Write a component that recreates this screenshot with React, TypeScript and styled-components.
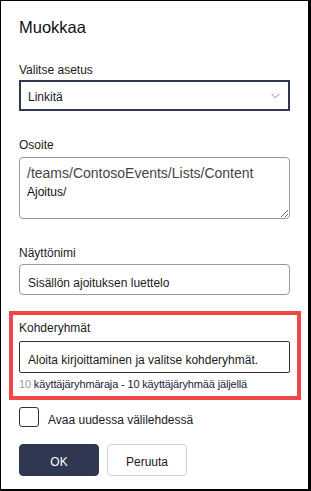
import React from "react";
import styled, { createGlobalStyle } from "styled-components";

const Global = createGlobalStyle`
  html, body { margin: 0; padding: 0; background: #fff; }
  body { font-family: "Liberation Sans", Arial, sans-serif; color: #1b1b1b; }
  * { box-sizing: border-box; }
`;

const NAVY = "#2f3751";

const Panel = styled.div`
  width: 311px;
  height: 491px;
  border-style: solid;
  border-color: #000;
  border-width: 1px 3px 2px 1px;
  padding: 16px 18px 0 18px;
  display: flex;
  flex-direction: column;
  background: #fff;
`;

const Title = styled.h1`
  margin: 0;
  font-size: 16.5px;
  line-height: 20px;
  font-weight: 400;
  color: #111;
`;

const Field = styled.div<{ $mt: number }>`
  margin-top: ${(p) => p.$mt}px;
  display: flex;
  flex-direction: column;
`;

const Label = styled.label<{ $mb: number }>`
  font-size: 12px;
  line-height: 16px;
  color: #1b1b1b;
  margin-bottom: ${(p) => p.$mb}px;
`;

const Select = styled.div`
  position: relative;
  height: 31px;
  border: 2px solid ${NAVY};
  padding: 7px 8px 0 7px;
  font-size: 12px;
  line-height: 16px;
  color: #1b1b1b;
  display: flex;
  justify-content: space-between;
`;

const Chevron = styled.svg`
  position: absolute;
  right: 8px;
  top: 11px;
`;

const AddressBox = styled.div`
  height: 62px;
  border: 1px solid #9a9a9a;
  border-radius: 4px;
  padding: 6px 8px 0 7px;
  resize: vertical;
  overflow: hidden;
`;

const AddressMain = styled.div`
  font-size: 14px;
  line-height: 18px;
  color: #444;
`;

const AddressTail = styled.div`
  font-size: 12px;
  line-height: 16px;
  margin-top: 2px;
  color: #111;
`;

const TextInput = styled.div<{ $h: number; $border: string; $radius: number }>`
  height: ${(p) => p.$h}px;
  border: 1px solid ${(p) => p.$border};
  border-radius: ${(p) => p.$radius}px;
  padding: 10px 8px 0 8px;
  font-size: 12px;
  line-height: 16px;
  color: #1b1b1b;
  white-space: nowrap;
`;

const Highlight = styled.div`
  margin: 16px -11px 0 -10px;
  border: 4px solid #f04848;
  padding: 5px 7px 5px 6px;
  display: flex;
  flex-direction: column;
`;

const Helper = styled.div`
  margin-top: 4px;
  font-size: 11px;
  line-height: 14px;
  letter-spacing: -0.15px;
  color: #1d2340;
  white-space: nowrap;
`;

const Count = styled.span`
  color: #9a9a9a;
`;

const CheckRow = styled.div`
  margin-top: 7px;
  display: flex;
  align-items: flex-start;
  gap: 9px;
`;

const Box = styled.span`
  width: 20px;
  height: 20px;
  border: 1px solid #333;
  border-radius: 3px;
  flex: none;
`;

const CheckText = styled.span`
  padding-top: 5px;
  font-size: 12px;
  line-height: 16px;
  color: #1b1b1b;
`;

const Buttons = styled.div`
  margin-top: 16px;
  display: flex;
  gap: 8px;
`;

const Button = styled.button<{ $primary?: boolean }>`
  width: 80px;
  height: 32px;
  border-radius: 4px;
  border: 1px solid ${(p) => (p.$primary ? NAVY : "#cfcfcf")};
  background: ${(p) => (p.$primary ? NAVY : "#fff")};
  color: ${(p) => (p.$primary ? "#fff" : "#1b1b1b")};
  font-family: "Liberation Sans", Arial, sans-serif;
  font-size: 12px;
  line-height: 16px;
  padding: 4px 0 0 0;
  display: flex;
  align-items: center;
  justify-content: center;
`;

export default function App() {
  return (
    <>
      <Global />
      <Panel>
        <Title>Muokkaa</Title>
        <Field $mt={25}>
          <Label $mb={2}>Valitse asetus</Label>
          <Select>
            <span>Linkitä</span>
            <Chevron width="9" height="6" viewBox="0 0 9 6">
              <path d="M0.5 0.8 L4.5 4.8 L8.5 0.8" fill="none" stroke="#8a8a8a" strokeWidth="1" />
            </Chevron>
          </Select>
        </Field>
        <Field $mt={26}>
          <Label $mb={4}>Osoite</Label>
          <AddressBox>
            <AddressMain>/teams/ContosoEvents/Lists/Content</AddressMain>
            <AddressTail>Ajoitus/</AddressTail>
          </AddressBox>
        </Field>
        <Field $mt={26}>
          <Label $mb={3}>Näyttönimi</Label>
          <TextInput $h={31} $border="#9a9a9a" $radius={4}>
            Sisällön ajoituksen luettelo
          </TextInput>
        </Field>
        <Highlight>
          <Label $mb={5}>Kohderyhmät</Label>
          <TextInput $h={32} $border="#333" $radius={2}>
            Aloita kirjoittaminen ja valitse kohderyhmät.
          </TextInput>
          <Helper>
            <Count>10</Count> käyttäjäryhmäraja - 10 käyttäjäryhmää jäljellä
          </Helper>
        </Highlight>
        <CheckRow>
          <Box />
          <CheckText>Avaa uudessa välilehdessä</CheckText>
        </CheckRow>
        <Buttons>
          <Button $primary>OK</Button>
          <Button>Peruuta</Button>
        </Buttons>
      </Panel>
    </>
  );
}
